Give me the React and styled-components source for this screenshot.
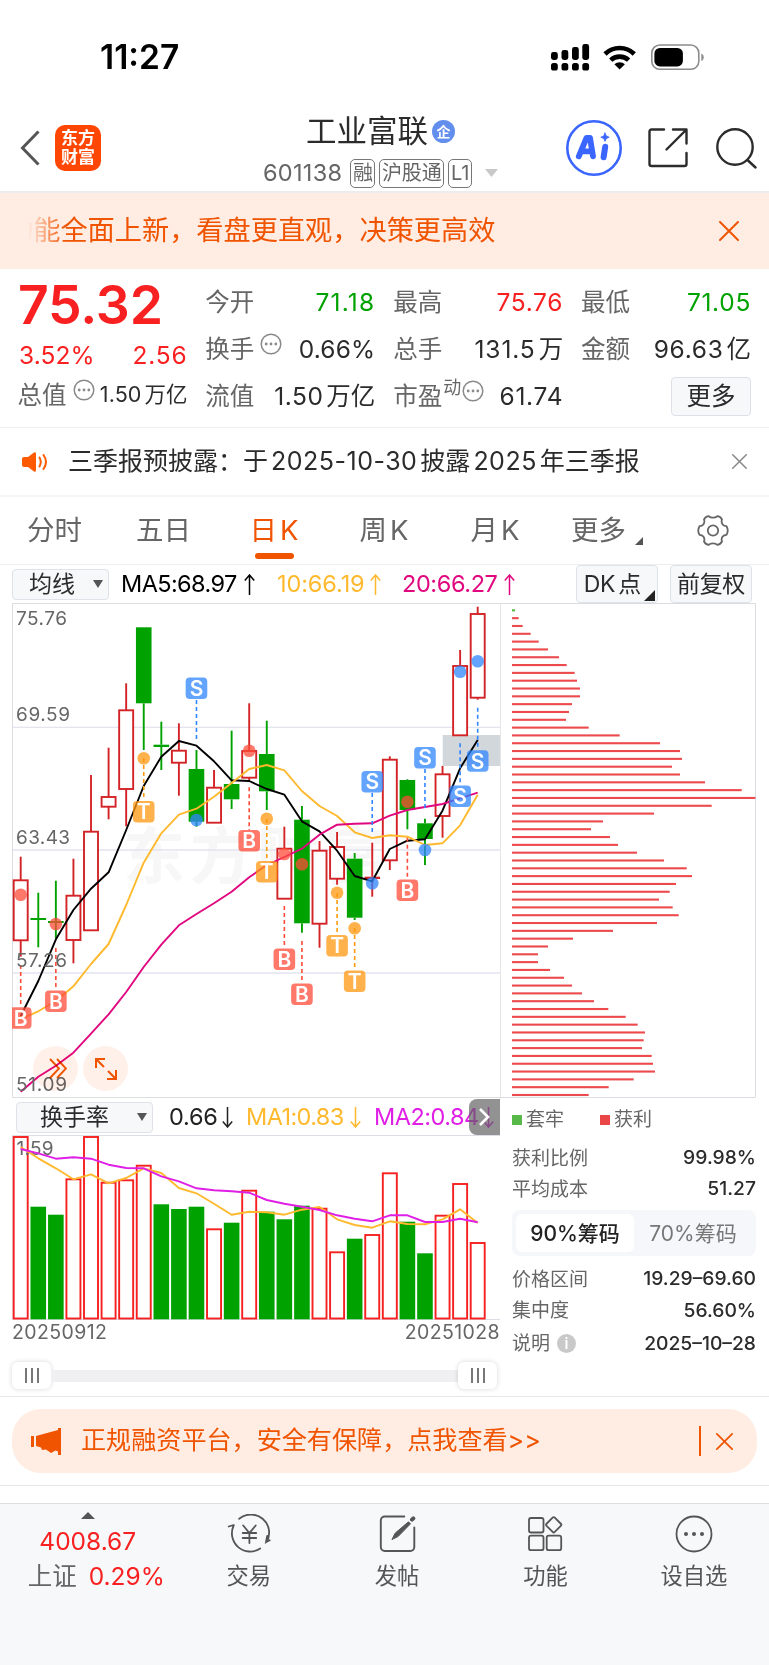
import React from 'react'
import styled, { createGlobalStyle } from 'styled-components'

const RED = '#f82020'
const GREEN = '#00a200'
const ORANGE = '#f05400'

const START_X = 20.7
const STEP = 17.577

// type, high, body top, body bottom, low
const candles = [
  ['r', 856.7, 880.3, 940.3, 956.7],
  ['g', 892.7, 918, 920, 947.3],
  ['g', 880.7, 921, 923, 938.3],
  ['r', 858.7, 895.7, 940, 963.3],
  ['r', 775, 831.7, 930.3, 930.3],
  ['r', 747.7, 797, 806.7, 819.3],
  ['r', 683.3, 710.3, 789, 826.3],
  ['g', 627.3, 627.3, 703.3, 750],
  ['g', 721.7, 744.7, 747, 770],
  ['r', 723.3, 750.7, 762.7, 795.7],
  ['g', 750, 769, 821.7, 826.7],
  ['r', 770, 787.7, 822.7, 822.7],
  ['g', 730.7, 784, 799.3, 809],
  ['r', 703.3, 751, 777.7, 781.7],
  ['g', 720.7, 754, 791.3, 810],
  ['r', 826.7, 848.7, 898.7, 898.7],
  ['g', 806, 819.7, 923.3, 932.7],
  ['r', 841, 850.7, 923.7, 947.7],
  ['r', 832, 847, 878.7, 884.7],
  ['g', 853, 858.7, 917.7, 920],
  ['d', 842.7, 876.7, 879, 896.7],
  ['r', 756.3, 759.7, 860.3, 870],
  ['g', 779.3, 780, 810, 829.3],
  ['g', 818.7, 823.3, 839, 865],
  ['r', 766, 774.3, 816, 837.7],
  ['r', 650, 666, 735.3, 735.3],
  ['r', 606.7, 614, 697.7, 699.7],
]

const ma5 = [1016, 981, 939.3, 910, 888.7, 872.3, 830, 786, 756.7, 741, 745.7, 761.3, 780.3, 781, 789, 794.7, 821.3, 831.3, 850.7, 876, 881.3, 849, 840.7, 839.3, 810.7, 768.3, 740]
const ma10 = [1019, 1011.3, 1001, 986.3, 964, 944, 905, 862.7, 833.3, 814.7, 808.7, 796.7, 783, 769, 765, 770.3, 791, 806, 816, 832.3, 838, 835.3, 836.7, 845, 843.3, 825.3, 794.7]
const ma20 = [1091.7, 1076.7, 1065.7, 1052.7, 1033.7, 1014.3, 992, 967, 944.7, 925.3, 914, 903.3, 891.7, 877.3, 865, 857, 848.7, 834.7, 824.7, 823.7, 823.3, 815.7, 810, 807, 804, 798.3, 792.7]

// index, kind, dot y, dash from, dash to, badge y
const signals = [
  [0, 'B', 894.7, 965, 1006, 1018],
  [2, 'B', 924, 948, 990, 1001.3],
  [7, 'T', 758.3, 758, 800, 811.7],
  [10, 'S', 820, 700, 742, 688.3],
  [13, 'B', 750.7, 787.3, 830, 840.7],
  [14, 'T', 818.7, 819, 860, 871.7],
  [15, 'B', 854, 906, 947, 959.3],
  [16, 'B', 864.3, 941, 982, 994.3],
  [18, 'T', 892.7, 893, 934, 945.7],
  [19, 'T', 928.3, 928, 969, 981.3],
  [20, 'S', 883.3, 793, 835, 781.7],
  [22, 'B', 801.7, 837.7, 878, 890.3],
  [23, 'S', 850, 769, 811, 757.7],
  [25, 'S', 671.7, 743.3, 784, 796.3],
  [26, 'S', 661.3, 707.7, 749, 761],
]

const signalColor = { B: '#ff4b37', T: '#ff980f', S: '#2f86ff' }

const chips = [
  9, 20, 32, 56, 80, 108, 141, 164, 188, 195, 204, 204, 180, 171, 162, 230, 323, 444, 504, 510,
  480, 504, 579, 689, 730, 599, 426, 273, 237, 294, 318, 375, 456, 524, 540, 492, 473, 441, 482, 500,
  435, 303, 183, 108, 78, 78, 114, 156, 180, 210, 246, 289, 341, 377, 399, 395, 390, 419, 423, 429,
  365, 290, 230,
]

const volumes = [
  ['r', 1137], ['g', 1206.7], ['g', 1214.7], ['r', 1179.3], ['r', 1137], ['r', 1182.7], ['r', 1180.3],
  ['r', 1165.7], ['g', 1204.3], ['g', 1209], ['g', 1206.7], ['r', 1229.3], ['g', 1222.7], ['r', 1190.7],
  ['g', 1211.7], ['g', 1219.3], ['g', 1205.7], ['r', 1208.7], ['r', 1252.3], ['g', 1238.7], ['r', 1235],
  ['r', 1173.3], ['g', 1221.7], ['g', 1253.3], ['r', 1215.7], ['r', 1184], ['r', 1243],
]
const volMa1 = [1147, 1158.3, 1168.3, 1179.3, 1174.3, 1183.3, 1178, 1168.3, 1173, 1188, 1193.3, 1203.7, 1214.7, 1211.7, 1212.3, 1214.7, 1209.7, 1207, 1219.3, 1225, 1227.7, 1221.3, 1224, 1224.3, 1219.3, 1209.3, 1223]
const volMa2 = [1149, 1153.3, 1158.7, 1157.3, 1158.7, 1164.7, 1168, 1168.3, 1176.3, 1181.3, 1188.3, 1190.3, 1191.3, 1192.7, 1200, 1203.7, 1206.7, 1210, 1215.3, 1218.7, 1221.3, 1215.3, 1215.3, 1222, 1222, 1218.7, 1222.3]

const cx = (i) => START_X + STEP * i
const toPoints = (list) => list.map((y, i) => `${cx(i).toFixed(1)},${y}`).join(' ')

function Close({ size, color, width = 2 }) {
  return (
    <svg width={size} height={size} viewBox="0 0 20 20" fill="none" stroke={color} strokeWidth={width} strokeLinecap="round">
      <path d="M1 1 19 19M19 1 1 19" />
    </svg>
  )
}

function More() {
  return (
    <svg width="22" height="22" viewBox="0 0 22 22" fill="#8a8a8a">
      <circle cx="11" cy="11" r="9.8" fill="none" stroke="#8a8a8a" strokeWidth="1.5" />
      <circle cx="6.2" cy="11" r="1.4" />
      <circle cx="11" cy="11" r="1.4" />
      <circle cx="15.8" cy="11" r="1.4" />
    </svg>
  )
}

function Arrow({ color, down }) {
  return (
    <svg width="11" height="21" viewBox="0 0 11 21" fill="none" stroke={color} strokeWidth="1.5">
      <path d={down ? 'M5.5 0V20M.8 14.5 5.5 20 10.2 14.5' : 'M5.5 21V1M.8 6.5 5.5 1 10.2 6.5'} />
    </svg>
  )
}

function StatusIcons() {
  return (
    <svg width="154" height="30" viewBox="550 42 154 30">
      {[551, 561.5, 572, 582.3].map((x, i) => (
        <g key={x}>
          <rect x={x} y={[52, 50, 47, 44][i]} width="6.8" height={[8, 10, 13, 16][i]} rx="2.4" />
          <rect x={x} y="63" width="6.8" height="7.6" rx="2.6" />
        </g>
      ))}
      <g fill="none" stroke="#000" strokeWidth="4.6">
        <path d="M605 54a21 21 0 0 1 29.3 0" />
        <path d="M610.7 60.2a13 13 0 0 1 17.9 0" />
      </g>
      <path d="M614.4 64.2a8.3 8.3 0 0 1 10.5 0L619.6 69.5z" />
      <rect x="651.8" y="45" width="47" height="24.3" rx="8" fill="none" stroke="#8c8c8c" strokeWidth="1.6" />
      <rect x="654.4" y="48" width="28.5" height="18.4" rx="5.5" />
      <path d="M701.3 53.5a4 4 0 0 1 0 7.4z" fill="#8c8c8c" />
    </svg>
  )
}

function KLine() {
  return (
    <svg width="488" height="496" viewBox="12 603 488 496">
      <text x="123" y="879" fontSize="62" fontWeight="700" letterSpacing="5" fill="#f7f7f7">东方财富</text>
      <g stroke="#e2e4ef" strokeWidth="1.3">
        <path d="M12 727.3H500M12 850H500M12 973H500" />
      </g>
      <path d="M500 603.5H12.5V1097.5H500" fill="none" stroke="#dcdde0" />
      <rect x="442.7" y="735" width="57.3" height="31" fill="#d2d7dc" />
      {candles.map(([t, high, top, bottom, low], i) => {
        const x = cx(i)
        const color = t === 'g' ? GREEN : '#d32326'
        return (
          <g key={i} stroke={color} strokeWidth="1.9">
            {high < top && <path d={`M${x} ${high}V${top}`} />}
            {low > bottom && <path d={`M${x} ${bottom}V${low}`} />}
            {t === 'r'
              ? <rect x={x - 7} y={top} width="14" height={bottom - top} fill="#fff" />
              : <rect x={x - 7.8} y={top} width="15.6" height={bottom - top} fill={color} stroke="none" />}
          </g>
        )
      })}
      <g fill="none" strokeWidth="1.9" strokeLinejoin="round">
        <polyline points={toPoints(ma5)} stroke="#000" />
        <polyline points={toPoints(ma10)} stroke="#ffb92e" />
        <polyline points={toPoints(ma20)} stroke="#e0077f" />
      </g>
      {signals.map(([i, kind, dot, from, to, y]) => (
        <g key={i} fill={signalColor[kind]}>
          <circle cx={cx(i)} cy={dot} r="6.3" fillOpacity="0.75" />
          <path d={`M${cx(i)} ${from}V${to}`} stroke={signalColor[kind]} strokeWidth="1.6" strokeDasharray="4 3" />
          <rect x={cx(i) - 10.8} y={y - 10.8} width="21.6" height="21.6" rx="4" fillOpacity="0.75" />
          <text x={cx(i)} y={y + 7.6} fontSize="21" fontWeight="600" textAnchor="middle" fill="#fff">{kind}</text>
        </g>
      ))}
      <g fontSize="19" fill="#666">
        <text x="16" y="624.5" textLength="51">75.76</text>
        <text x="16" y="721" textLength="54">69.59</text>
        <text x="16" y="844" textLength="54">63.43</text>
        <text x="16" y="967" textLength="51">57.26</text>
        <text x="16" y="1090.5" textLength="51">51.09</text>
      </g>
    </svg>
  )
}

function Chips() {
  return (
    <svg width="257" height="496" viewBox="500 603 257 496">
      <path d="M500 603.5H755.5V1097.5H500" fill="none" stroke="#d9dce1" />
      <path d="M500.5 603V1099" stroke="#e4e6e8" />
      {chips.map((w, i) => (
        <rect key={i} x="512" y={609.3 + i * 7.817} width={w / 3} height="2.1" fill={i === 0 ? '#52b83c' : '#ec4a4c'} />
      ))}
    </svg>
  )
}

function Volume() {
  return (
    <svg width="488" height="185" viewBox="12 1135 488 185">
      <path d="M500 1135.5H12.5V1319.5H500" fill="none" stroke="#dcdde6" />
      {volumes.map(([t, top], i) => t === 'r'
        ? <rect key={i} x={cx(i) - 7} y={top} width="14" height={1318.5 - top} fill="#fff" stroke="#f5201f" strokeWidth="1.9" />
        : <rect key={i} x={cx(i) - 7.8} y={top} width="15.6" height={1319.3 - top} fill={GREEN} />)}
      <text x="16.5" y="1155" fontSize="19" fill="#666" textLength="37">1.59</text>
      <g fill="none" strokeWidth="1.9" strokeLinejoin="round">
        <polyline points={toPoints(volMa1)} stroke="#ffb92e" />
        <polyline points={toPoints(volMa2)} stroke="#e01fe6" />
      </g>
    </svg>
  )
}

function App() {
  return (
    <Page>
      <GlobalStyle />
      <StatusBar>
        <Time>11:27</Time>
        <StatusIcons />
      </StatusBar>

      <Header>
        <HeaderLeft>
          <svg width="20" height="36" viewBox="0 0 20 36" fill="none" stroke="#555" strokeWidth="3">
            <path d="M18.5 1.5 2.5 18 18.5 34.5" />
          </svg>
          <Logo>东方<br />财富</Logo>
        </HeaderLeft>
        <Title>
          <h1>工业富联 <Badge>企</Badge></h1>
          <Code>
            <span>601138</span>
            <Tag>融</Tag>
            <Tag>沪股通</Tag>
            <Tag>L1</Tag>
            <svg width="13" height="8" viewBox="0 0 13 8" fill="#c8c8c8"><path d="M0 0H13L6.5 8z" /></svg>
          </Code>
        </Title>
        <HeaderRight>
          <svg width="56" height="56" viewBox="0 0 56 56">
            <circle cx="28" cy="28" r="26.7" fill="#fff" stroke="#3a66ff" strokeWidth="2.6" />
            <g fill="none" stroke="#3a66ff" strokeLinecap="round" strokeLinejoin="round">
              <path d="M12.8 36.3 20.5 17.8H24L27 36.3M18 31.3H26" strokeWidth="5.8" />
              <path d="M39.2 26.8 37.6 37.2" strokeWidth="6" />
              <path d="M39 13 40.3 15.900 43.200 17.200 40.300 18.500 39 21.400 37.700 18.500 34.800 17.200 37.700 15.900z" fill="#3a66ff" strokeWidth="0.8" />
            </g>
          </svg>
          <svg width="40" height="40" viewBox="0 0 40 40" fill="none" stroke="#2c2c2c" strokeWidth="2.4" strokeLinecap="round" strokeLinejoin="round">
            <path d="M16 1.5H3.5A2 2 0 0 0 1.5 3.5V36A2 2 0 0 0 3.5 38H36.5A2 2 0 0 0 38.5 36V25M25 1.5H38.5V15.5M38 2 18.5 21.5" />
          </svg>
          <svg width="41" height="41" viewBox="0 0 41 41" fill="none" stroke="#2c2c2c" strokeWidth="2.4" strokeLinecap="round">
            <circle cx="19" cy="19" r="17.7" />
            <path d="M31.5 32 39.5 39.5" />
          </svg>
        </HeaderRight>
      </Header>

      <Banner>
        <Marquee><span>功能全面上新，看盘更直观，决策更高效</span></Marquee>
        <Close size={20} color={ORANGE} />
      </Banner>

      <Quote>
        <QuoteCol>
          <Row $h={53}><Price>75.32</Price></Row>
          <Row $h={47}><Num $color={RED} $ls={0.1}>3.52%</Num><Num $color={RED} $ls={0.8}>2.56</Num></Row>
          <Row $h={33}><Label>总值<More /></Label><Num $size={21.5} $ls={0.1}>1.50<Cn>万亿</Cn></Num></Row>
        </QuoteCol>
        <QuoteCol>
          <Row><Label>今开</Label><Num $color={GREEN} $ls={1.2}>71.18</Num></Row>
          <Row><Label>换手<More /></Label><Num $ls={0.2}>0.66%</Num></Row>
          <Row><Label>流值</Label><Num $ls={0.5}>1.50<Cn>万亿</Cn></Num></Row>
        </QuoteCol>
        <QuoteCol>
          <Row><Label>最高</Label><Num $color={RED} $ls={0.7}>75.76</Num></Row>
          <Row><Label>总手</Label><Num $ls={0.9}>131.5<Cn>万</Cn></Num></Row>
          <Row><Label>市盈<sup>动</sup><More /></Label><Num $ls={0.7}>61.74</Num></Row>
        </QuoteCol>
        <QuoteCol>
          <Row><Label>最低</Label><Num $color={GREEN} $ls={0.7}>71.05</Num></Row>
          <Row><Label>金额</Label><Num $ls={0.7}>96.63<Cn>亿</Cn></Num></Row>
          <Row $end><MoreButton>更多</MoreButton></Row>
        </QuoteCol>
      </Quote>

      <Notice>
        <svg width="26" height="22" viewBox="0 0 26 22" fill="none" stroke="#ff5a00" strokeWidth="2" strokeLinecap="round">
          <path d="M2 6H6L12 1.5Q14 .5 14 3V19Q14 21.5 12 20.5L6 16H2Q0 16 0 14V8Q0 6 2 6z" fill="#ff5a00" stroke="none" />
          <path d="M17.5 6.5Q20 11 17.5 15.5M21.5 4Q26.5 11 21.5 18" />
        </svg>
        <p>三季报预披露：于<Cn $ls={0.5}>2025-10-30</Cn><Cn>披露</Cn><Cn $ls={0.5}>2025</Cn><Cn>年三季报</Cn></p>
        <Close size={15} color="#888" />
      </Notice>

      <Tabs>
        <Tab>分时</Tab>
        <Tab>五日</Tab>
        <Tab $active>日<Cn>K</Cn></Tab>
        <Tab>周<Cn>K</Cn></Tab>
        <Tab>月<Cn>K</Cn></Tab>
        <Tab>
          更多
          <Corner width="8" height="8" viewBox="0 0 8 8" fill="#555"><path d="M8 0V8H0z" /></Corner>
        </Tab>
        <Tab>
          <svg width="32" height="31" viewBox="0 0 32 31" fill="none" stroke="#666" strokeWidth="1.8" strokeLinejoin="round">
            <path d="M12 1.2C13.3 3.2 18.7 3.2 20 1.2Q23.5 1.5 25 4.5C23.7 8 26 11.2 29.5 11.2Q32 15.5 29.5 19.8C26 19.8 23.7 23 25 26.5Q23.5 29.5 20 29.8C18.7 27.8 13.3 27.8 12 29.8Q8.5 29.5 7 26.5C8.3 23 6 19.8 2.5 19.8Q0 15.5 2.5 11.2C6 11.2 8.3 8 7 4.5Q8.5 1.5 12 1.2z" />
            <circle cx="16" cy="15.5" r="5.2" />
          </svg>
        </Tab>
      </Tabs>

      <MaBar>
        <Select $w={97}>均线<Caret /></Select>
        <MaText $color="#000" $ml={12} $w={115} $ls={-0.6}>MA5:68.97</MaText><Arrow color="#000" />
        <MaText $color="#ffb92e" $ml={22} $w={85} $ls={-0.1}>10:66.19</MaText><Arrow color="#ffb92e" />
        <MaText $color="#e0077f" $ml={21} $w={94} $ls={-0.4}>20:66.27</MaText><Arrow color="#e0077f" />
        <MaButtons>
          <BarButton $w={82}>
            DK<Cn>点</Cn>
            <svg width="11" height="11" viewBox="0 0 11 11" fill="#222"><path d="M11 0V11H0z" /></svg>
          </BarButton>
          <BarButton $w={82}>前复权</BarButton>
        </MaButtons>
      </MaBar>

      <Charts>
        <ChartCol>
          <KLineWrap>
            <KLine />
            <FloatButtons>
              <RoundButton>
                <svg width="18" height="21" viewBox="0 0 18 21" fill="none" stroke={ORANGE} strokeWidth="1.9">
                  <path d="M1 1 10 10.5 1 20M8 1 17 10.5 8 20" />
                </svg>
              </RoundButton>
              <RoundButton>
                <svg width="22" height="22" viewBox="0 0 22 22" fill="none" stroke={ORANGE} strokeWidth="2">
                  <path d="M10 1H1V10M1 1 9 9M12 21H21V12M21 21 13 13" />
                </svg>
              </RoundButton>
            </FloatButtons>
          </KLineWrap>
          <VolBar>
            <Select $w={137}>换手率<Caret /></Select>
            <MaText $color="#222" $ml={16} $w={45} $ls={-0.2}>0.66</MaText><Arrow color="#222" down />
            <MaText $color="#ffb92e" $ml={13} $w={96} $ls={-0.6}>MA1:0.83</MaText><Arrow color="#ffb92e" down />
            <MaText $color="#e01fe6" $ml={13} $w={101} $ls={-0.5}>MA2:0.84</MaText><Arrow color="#e01fe6" down />
            <NextButton>
              <svg width="11" height="18" viewBox="0 0 11 18" fill="none" stroke="#fff" strokeWidth="2.6"><path d="M1 1 9 9 1 17" /></svg>
            </NextButton>
          </VolBar>
          <Volume />
          <Dates><span>20250912</span><span>20251028</span></Dates>
          <Slider>
            <Handle><i /><i /><i /></Handle>
            <Track />
            <Handle><i /><i /><i /></Handle>
          </Slider>
        </ChartCol>
        <ChipCol>
          <Chips />
          <ChipPanel>
            <Legend>
              <Square $color="#57b947" /><span>套牢</span>
              <Square $color="#ea4648" /><span>获利</span>
            </Legend>
            <Stat $h={31}><span>获利比例</span><b>99.98%</b></Stat>
            <Stat $h={31}><span>平均成本</span><b>51.27</b></Stat>
            <Toggle><ToggleItem $on>90%筹码</ToggleItem><ToggleItem>70%筹码</ToggleItem></Toggle>
            <Stat $h={31}><span>价格区间</span><b>19.29–69.60</b></Stat>
            <Stat $h={32}><span>集中度</span><b>56.60%</b></Stat>
            <Stat $h={34}><span>说明<Info>i</Info></span><b>2025–10–28</b></Stat>
          </ChipPanel>
        </ChipCol>
      </Charts>

      <PromoWrap>
        <Promo>
          <svg width="31" height="27" viewBox="0 0 31 27" fill={ORANGE}>
            <path d="M0 8H3V19H0zM5 8 27 2V0H30V27H27V23.5L24.5 22.5 20 25 15 21.5 11 22 10 19.5 5 18z" />
          </svg>
          <p>正规融资平台，安全有保障，点我查看&gt;&gt;</p>
          <Divider />
          <Close size={17} color={ORANGE} />
        </Promo>
      </PromoWrap>

      <TabBar>
        <IndexItem>
          <svg width="14" height="7" viewBox="0 0 14 7" fill="#555"><path d="M7 0 14 7H0z" /></svg>
          <Num $color={RED} $size={24.5}>4008.67</Num>
          <IndexLine>上证<Num $color={RED}>0.29%</Num></IndexLine>
        </IndexItem>
        <NavItem>
          <svg width="44" height="40" viewBox="227.3 1514 44 40" fill="none" stroke="#555" strokeWidth="1.8" strokeLinecap="round">
            <path d="M239.5 1518.8A18.2 18.2 0 0 1 267 1541.8L270 1540.3M266.300 1542 267.500 1536M260.5 1548.5A18.2 18.2 0 0 1 234 1525.500M229 1526.5 234 1525" />
            <path d="M243.5 1525.5 249.7 1533 256 1525.5M249.7 1533V1543M243 1533H256.5M243 1538H256.5" />
          </svg>
          交易
        </NavItem>
        <NavItem>
          <svg width="38" height="40" viewBox="378.7 1514 38 40" fill="none" stroke="#555" strokeWidth="1.9" strokeLinecap="round">
            <path d="M405 1516.5H385.5A4 4 0 0 0 381.5 1520.5V1547A4 4 0 0 0 385.5 1551H411A4 4 0 0 0 415 1547V1527.5" />
            <path d="M392.8 1539.2 396 1533 409.2 1521.8 411.2 1523.8 399 1536.3z" fill="#555" strokeWidth="1" />
            <path d="M412.7 1519.7 414 1518.4" strokeWidth="4" />
          </svg>
          发帖
        </NavItem>
        <NavItem>
          <svg width="36" height="40" viewBox="528.3 1514 36 40" fill="none" stroke="#555" strokeWidth="1.8">
            <rect x="530.3" y="1518" width="14.5" height="14.5" rx="2" />
            <rect x="530.3" y="1535.7" width="14.5" height="14.5" rx="2" />
            <rect x="548" y="1535.7" width="14.5" height="14.5" rx="2" />
            <rect x="549.2" y="1519" width="11.6" height="11.6" rx="1.5" transform="rotate(45 555 1524.8)" />
          </svg>
          功能
        </NavItem>
        <NavItem>
          <svg width="38" height="40" viewBox="0 0 38 40" fill="#555">
            <circle cx="19" cy="20" r="17.5" fill="none" stroke="#555" strokeWidth="1.8" />
            <circle cx="11" cy="20" r="2" />
            <circle cx="19" cy="20" r="2" />
            <circle cx="27" cy="20" r="2" />
          </svg>
          设自选
        </NavItem>
      </TabBar>
    </Page>
  )
}

export default App

const GlobalStyle = createGlobalStyle`
  * {
    box-sizing: border-box;
    margin: 0;
    padding: 0;
  }
  body {
    background: #fff;
    font-family: Inter, 'Noto Sans CJK SC', sans-serif;
    line-height: 1;
    color: #2b2b2b;
  }
  svg {
    display: block;
    flex-shrink: 0;
  }
`

const Page = styled.div`
  width: 769px;
  height: 1665px;
  overflow: hidden;
  display: flex;
  flex-direction: column;
  white-space: nowrap;
`

const StatusBar = styled.div`
  height: 114px;
  padding: 0 65px 0 100px;
  display: flex;
  align-items: center;
  justify-content: space-between;
`

const Time = styled.span`
  margin-top: 2px;
  font-size: 33.5px;
  font-weight: 600;
  color: #000;
`

const Header = styled.header`
  height: 79px;
  border-bottom: 2px solid #ececec;
  padding: 0 12px 0 20px;
  display: grid;
  grid-template-columns: 243px 1fr 200px;
`

const HeaderLeft = styled.div`
  display: flex;
  align-items: center;
  gap: 15px;
  height: 68px;
`

const Logo = styled.div`
  width: 46px;
  height: 46px;
  border-radius: 10px;
  background: #ff4602;
  color: #fff;
  font-size: 17px;
  font-weight: 700;
  line-height: 19px;
  text-align: center;
  padding-top: 4px;
`

const Title = styled.div`
  h1 {
    display: flex;
    align-items: center;
    gap: 4px;
    height: 35px;
    padding-left: 43px;
    font-size: 30.5px;
    font-weight: 400;
  }
`

const Badge = styled.span`
  width: 23px;
  height: 23px;
  border-radius: 50%;
  background: #628eee;
  color: #fff;
  font-size: 14px;
  font-weight: 700;
  line-height: 23px;
  text-align: center;
`

const Code = styled.div`
  display: flex;
  align-items: center;
  gap: 4px;
  height: 46px;
  padding-top: 2px;
  color: #666;
  font-size: 23.5px;

  span:first-child {
    margin-right: 4px;
    letter-spacing: 0.3px;
  }
  svg {
    margin-left: 9px;
  }
`

const Tag = styled.span`
  height: 29px;
  padding: 0 1.5px;
  border: 1.5px solid #777;
  border-radius: 5px;
  font-size: 20px;
  line-height: 26px;
`

const HeaderRight = styled.div`
  display: flex;
  align-items: center;
  justify-content: flex-end;
  gap: 26px;
  height: 68px;

  svg:last-child {
    margin-left: 2px;
  }
`

const Banner = styled.div`
  height: 76px;
  background: #ffede4;
  padding: 0 30px 0 28px;
  display: flex;
  align-items: center;
  justify-content: space-between;
`

const Marquee = styled.div`
  overflow: hidden;
  color: ${ORANGE};
  font-size: 27.2px;
  line-height: 36px;
  mask-image: linear-gradient(to right, transparent 0, #000 38px);

  span {
    margin-left: -22px;
  }
`

const Quote = styled.section`
  height: 159px;
  padding: 9.5px 18px 0 19px;
  border-bottom: 1px solid #eee;
  display: grid;
  grid-template-columns: repeat(4, 1fr);
  column-gap: 19.3px;
`

const QuoteCol = styled.div`
  min-width: 0;
`

const Row = styled.div`
  height: ${(p) => p.$h || 47}px;
  display: flex;
  align-items: center;
  justify-content: ${(p) => (p.$end ? 'flex-end' : 'space-between')};
`

const Price = styled.b`
  margin-left: -1px;
  font-size: 53.5px;
  font-weight: 600;
  letter-spacing: -0.2px;
  color: ${RED};
`

const Num = styled.span`
  font-size: ${(p) => p.$size || 24.5}px;
  letter-spacing: ${(p) => p.$ls || 0}px;
  color: ${(p) => p.$color || '#2b2b2b'};
`

const Cn = styled.span`
  margin-left: 3px;
  letter-spacing: ${(p) => p.$ls || 0}px;
`

const Label = styled.span`
  display: flex;
  align-items: center;
  margin-left: -1.5px;
  font-size: 24.5px;
  color: #666;

  svg {
    margin: -10px 0 0 6px;
  }
  sup {
    font-size: 18px;
    margin: -16px 0 0 1px;
  }
  sup + svg {
    margin-left: 1px;
  }
`

const MoreButton = styled.button`
  width: 80px;
  height: 39px;
  border: 1.5px solid #dde1e7;
  border-radius: 4px;
  background: #f6f8fa;
  font: inherit;
  font-size: 24.5px;
  color: #2b2b2b;
`

const Notice = styled.div`
  height: 69px;
  padding: 0 22px;
  border-bottom: 2px solid #f5f5f6;
  display: flex;
  align-items: center;
  font-size: 25px;

  p {
    flex: 1;
    margin-left: 20px;
  }
`

const Tabs = styled.nav`
  height: 68px;
  border-bottom: 1px solid #eee;
  display: grid;
  grid-template-columns: 109px 109px 112px 108px 114px 100px 122px;
`

const Tab = styled.div`
  display: flex;
  align-items: center;
  justify-content: center;
  position: relative;
  font-size: 27.5px;
  color: ${(p) => (p.$active ? ORANGE : '#666')};

  &::after {
    content: '';
    display: ${(p) => (p.$active ? 'block' : 'none')};
    position: absolute;
    left: 37px;
    bottom: 5px;
    width: 39px;
    height: 6px;
    border-radius: 3px;
    background: ${ORANGE};
  }
`

const Corner = styled.svg`
  margin: 20px -10px 0 9px;
`

const MaBar = styled.div`
  height: 38px;
  padding: 0 17px 0 12px;
  display: flex;
  align-items: center;
`

const Select = styled.div`
  width: ${(p) => p.$w}px;
  height: 31px;
  border: 1.5px solid #dfe2e8;
  border-radius: 4px;
  background: #f6f8fa;
  display: flex;
  align-items: center;
  justify-content: space-between;
  padding: 0 5px 0 ${(p) => (p.$w > 100 ? 23 : 16)}px;
  font-size: 23px;
`

const Caret = styled.i`
  border: 5px solid transparent;
  border-top: 8px solid #555;
  border-bottom: 0;
`

const MaText = styled.span`
  width: ${(p) => p.$w}px;
  margin: 0 8px 0 ${(p) => p.$ml}px;
  font-size: 23.5px;
  letter-spacing: ${(p) => p.$ls || 0}px;
  color: ${(p) => p.$color};
`

const MaButtons = styled.div`
  margin-left: auto;
  display: flex;
  gap: 12px;
`

const BarButton = styled.div`
  width: ${(p) => p.$w}px;
  height: 38px;
  border: 1.5px solid #dfe2e8;
  border-radius: 4px;
  background: #f6f8fa;
  display: flex;
  align-items: center;
  justify-content: center;
  font-size: 23px;
  letter-spacing: -0.3px;

  svg {
    margin: 22px -5px 0 3px;
  }
`

const Charts = styled.section`
  height: 794px;
  padding-left: 12px;
  border-bottom: 1.5px solid #e6e7ea;
  display: flex;
`

const ChartCol = styled.div`
  width: 488px;
`

const KLineWrap = styled.div`
  position: relative;
`

const FloatButtons = styled.div`
  position: absolute;
  left: 21px;
  bottom: 8px;
  display: flex;
  gap: 5px;
  mix-blend-mode: multiply;
`

const RoundButton = styled.div`
  width: 45px;
  height: 45px;
  border-radius: 50%;
  background: #fff0e9;
  display: flex;
  align-items: center;
  justify-content: center;

  &:first-child svg {
    margin-left: 4px;
  }
`

const VolBar = styled.div`
  position: relative;
  height: 36px;
  padding-left: 4px;
  display: flex;
  align-items: center;
  overflow: hidden;
`

const NextButton = styled.div`
  position: absolute;
  right: 0;
  top: 0;
  width: 31px;
  height: 36px;
  border-radius: 8px 0 0 8px;
  background: rgba(95, 95, 95, 0.68);
  display: flex;
  align-items: center;
  justify-content: center;
`

const Dates = styled.div`
  height: 26px;
  display: flex;
  align-items: center;
  justify-content: space-between;
  font-size: 19.5px;
  letter-spacing: 0.4px;
  color: #666;
`

const Slider = styled.div`
  height: 48px;
  padding: 11px 3px 0 0;
  display: flex;
  align-items: center;
`

const Handle = styled.div`
  width: 39px;
  height: 27px;
  border-radius: 6px;
  background: #fff;
  box-shadow: 0 0 5px rgba(0, 0, 0, 0.16);
  display: flex;
  align-items: center;
  justify-content: center;
  gap: 4px;

  i {
    width: 2px;
    height: 15px;
    background: #777;
  }
`

const Track = styled.div`
  flex: 1;
  height: 12px;
  background: #f0f0f3;
`

const ChipCol = styled.div`
  width: 257px;
`

const ChipPanel = styled.div`
  padding: 0 1px 0 12px;
`

const Legend = styled.div`
  height: 43px;
  padding-bottom: 2px;
  display: flex;
  align-items: center;
  font-size: 19px;
  color: #666;

  span {
    margin: 0 36px 0 4px;
  }
`

const Square = styled.i`
  width: 10px;
  height: 10px;
  background: ${(p) => p.$color};
`

const Stat = styled.div`
  height: ${(p) => p.$h}px;
  padding-top: 1px;
  display: flex;
  align-items: center;
  justify-content: space-between;
  font-size: 19px;

  span {
    color: #666;
    display: flex;
    align-items: center;
  }
  b {
    font-weight: 500;
    font-size: 19.3px;
  }
`

const Info = styled.em`
  width: 19px;
  height: 19px;
  margin-left: 7px;
  border-radius: 50%;
  background: #c9c9c9;
  color: #fff;
  font-size: 15px;
  font-style: normal;
  font-weight: 600;
  line-height: 19px;
  text-align: center;
`

const Toggle = styled.div`
  height: 46px;
  margin: 6px 0 7px;
  padding: 4px;
  border-radius: 8px;
  background: #f6f7fa;
  display: flex;
`

const ToggleItem = styled.div`
  flex: 1;
  border-radius: 6px;
  background: ${(p) => (p.$on ? '#fff' : 'transparent')};
  color: ${(p) => (p.$on ? '#222' : '#777')};
  font-weight: ${(p) => (p.$on ? 500 : 400)};
  font-size: 21px;
  line-height: 39px;
  text-align: center;
`

const PromoWrap = styled.div`
  height: 89px;
  padding: 12px 12px 0;
  border-bottom: 1.5px solid #e6e7ea;
`

const Promo = styled.div`
  height: 64px;
  border-radius: 29px;
  background: #ffede4;
  padding: 0 24.5px 0 19px;
  display: flex;
  align-items: center;

  p {
    flex: 1;
    margin-left: 19px;
    font-size: 25.1px;
    color: ${ORANGE};
  }
`

const Divider = styled.i`
  width: 1.5px;
  height: 30px;
  margin-right: 15px;
  background: ${ORANGE};
`

const TabBar = styled.nav`
  flex: 1;
  margin-top: 17px;
  border-top: 1.5px solid #dcdde0;
  background: #f6f8fa;
  display: grid;
  grid-template-columns: 174.5px repeat(4, 148.4px);
  align-items: start;
`

const IndexItem = styled.div`
  display: flex;
  flex-direction: column;
  align-items: center;
  padding: 8px 0 0 1px;

  > span {
    margin-top: 10px;
  }
`

const IndexLine = styled.div`
  display: flex;
  align-items: center;
  gap: 12px;
  margin: 10px 0 0 17px;
  font-size: 24.5px;
  color: #666;
`

const NavItem = styled.div`
  display: flex;
  flex-direction: column;
  align-items: center;
  gap: 11px;
  padding-top: 10px;
  font-size: 22.3px;
  color: #555;
`
